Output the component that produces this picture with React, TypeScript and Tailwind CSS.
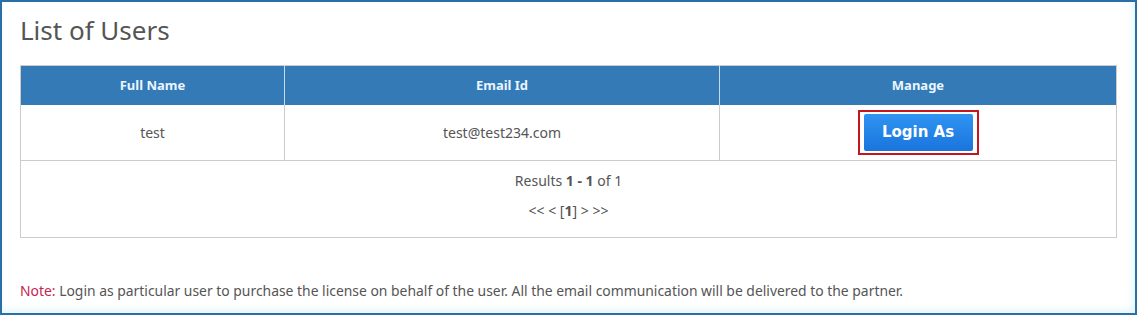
const users = [{ name: 'test', email: 'test@test234.com' }]

export default function App() {
  return (
    <div
      className="w-[1137px] h-[315px] border-2 border-[#2c6ea6] bg-white text-[#555] shadow-[inset_-6px_0_8px_-4px_#dff5fb,inset_0_-6px_8px_-4px_#dff5fb]"
      style={{ fontFamily: '"Noto Sans", "Open Sans", sans-serif' }}
    >
      <div className="pl-[18px] pr-[18px]">
        <h1 className="pt-[11px] text-[26px] leading-[34px] text-[#555] font-normal">List of Users</h1>

        <table className="mt-[18px] w-[1097px] border-collapse text-[14px] border border-[#ccc]">
          <thead>
            <tr className="bg-[#337ab7] text-[#eaf6ff] h-[39px] text-[13px]">
              <th className="w-[264px] font-bold border-r border-[#c9dcee]">Full Name</th>
              <th className="w-[435px] font-bold border-r border-[#c9dcee]">Email Id</th>
              <th className="font-bold">Manage</th>
            </tr>
          </thead>
          <tbody>
            {users.map((u) => (
              <tr key={u.email} className="h-[56px] border-b border-[#ccc]">
                <td className="text-center border-r border-[#ccc]">{u.name}</td>
                <td className="text-center border-r border-[#ccc]">{u.email}</td>
                <td className="text-center">
                  <span className="inline-block border-2 border-[#c4161c] px-[4px] py-[2px] align-middle">
                    <button
                      className="block w-[109px] h-[37px] bg-gradient-to-b from-[#2f94f2] to-[#1a74dc] text-white text-[15px] font-bold rounded-[2px]"
                      style={{ fontFamily: '"DejaVu Sans", Verdana, sans-serif' }}
                    >
                      Login As
                    </button>
                  </span>
                </td>
              </tr>
            ))}
            <tr className="h-[77px]">
              <td colSpan={3} className="text-center align-top pt-[10px]">
                <div className="leading-[19px]">
                  Results <b>1 - 1</b> of 1
                </div>
                <div className="mt-[11px] leading-[19px]">
                  &lt;&lt; &lt; [<b>1</b>] &gt; &gt;&gt;
                </div>
              </td>
            </tr>
          </tbody>
        </table>

        <p className="mt-[43px] text-[13.9px] leading-[19px]">
          <span className="text-[#c7254e]">Note:</span> Login as particular user to purchase the license on behalf of the user. All the email communication will be delivered to the partner.
        </p>
      </div>
    </div>
  )
}
